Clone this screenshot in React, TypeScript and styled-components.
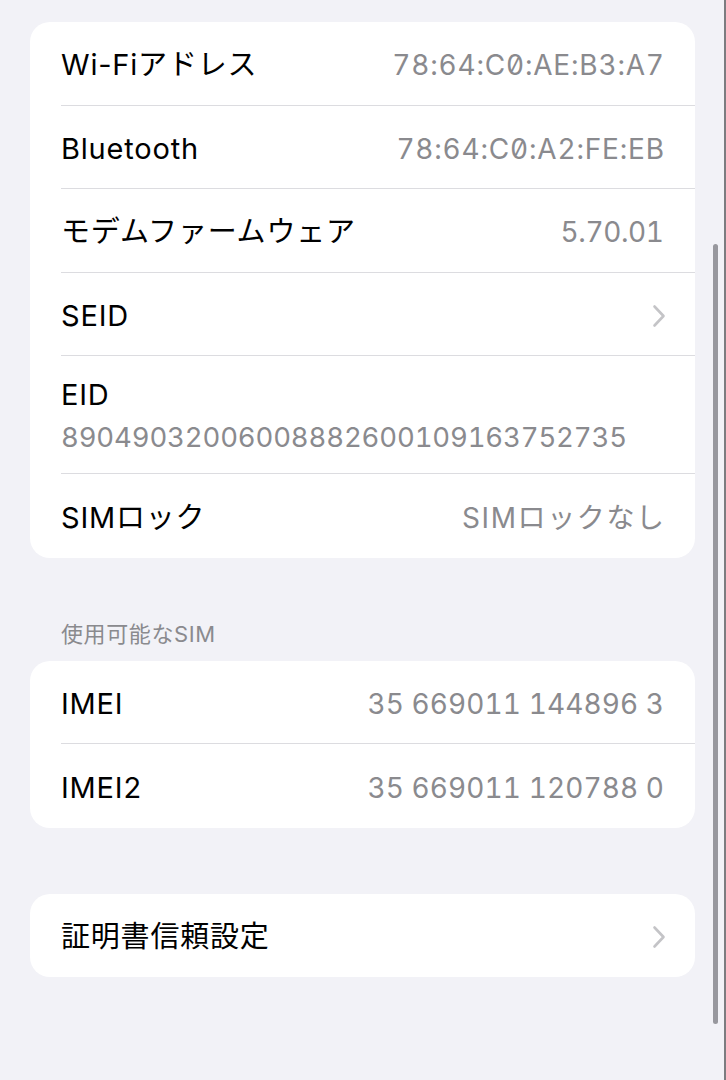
import React from "react";
import styled, { createGlobalStyle } from "styled-components";

const GlobalStyle = createGlobalStyle`
   html, body {
      margin: 0;
      padding: 0;
      background: #f2f2f7;
   }
   body {
      font-family: Inter, "Noto Sans CJK JP", sans-serif;
      -webkit-font-smoothing: antialiased;
   }
`;

const Screen = styled.div`
   position: relative;
   box-sizing: border-box;
   height: 1080px;
   overflow: hidden;
   padding: 22px 29px 0 30px;
   background: #f2f2f7;
   border-right: 2px solid #7c7c80;
`;

const Group = styled.div<{ gap?: number }>`
   background: #ffffff;
   border-radius: 20px;
   overflow: hidden;
   margin-top: ${({ gap }) => gap ?? 0}px;
`;

const SectionHeader = styled.div`
   margin: 62px 0 13px 31px;
   font-size: 22px;
   line-height: 28px;
   color: #8a8a8e;
   letter-spacing: 0.6px;
`;

const RowOuter = styled.div`
   padding-left: 31px;
   &:last-child > div {
      border-bottom: none;
   }
`;

const RowInner = styled.div`
   box-sizing: border-box;
   min-height: 83.5px;
   padding: 4px 31px 0 0;
   border-bottom: 1px solid #dcdce0;
   display: flex;
   align-items: center;
   justify-content: space-between;
   gap: 16px;
`;

const Label = styled.span`
   font-size: 29px;
   line-height: 36px;
   color: #000000;
   letter-spacing: 0.8px;
   white-space: nowrap;
`;

const Value = styled.span<{ tracking?: number; slashed?: boolean }>`
   font-size: 28px;
   line-height: 36px;
   color: #8a8a8e;
   white-space: nowrap;
   letter-spacing: ${({ tracking }) => tracking ?? 0}px;
   margin-right: ${({ tracking }) => -(tracking ?? 0)}px;
   font-feature-settings: "tnum" ${({ slashed }) => (slashed ? ', "zero"' : "")};
`;

const Stacked = styled.div`
   box-sizing: border-box;
   min-height: 117px;
   padding: 21px 31px 18px 0;
   border-bottom: 1px solid #dcdce0;
   display: flex;
   flex-direction: column;
   gap: 6px;
`;

const LongValue = styled(Value)`
   font-size: 27.5px;
`;

const Chevron = styled.svg`
   width: 14px;
   height: 24px;
   flex-shrink: 0;
   margin-right: -2px;
`;

const ScrollIndicator = styled.div`
   position: absolute;
   top: 244px;
   right: 6px;
   width: 5px;
   height: 780px;
   border-radius: 3px;
   background: #8e8e93;
   opacity: 0.9;
`;

const ChevronIcon: React.FC = () => (
   <Chevron viewBox="0 0 14 24">
      <path
         d="M2.5 2.5 L11.5 12 L2.5 21.5"
         fill="none"
         stroke="#c4c4c7"
         strokeWidth="2.6"
         strokeLinecap="round"
         strokeLinejoin="round"
      />
   </Chevron>
);

interface RowProps {
   label: string;
   value?: string;
   tracking?: number;
   slashed?: boolean;
   chevron?: boolean;
}

const Row: React.FC<RowProps> = ({ label, value, tracking, slashed, chevron }) => (
   <RowOuter>
      <RowInner>
         <Label>{label}</Label>
         {value && (
            <Value tracking={tracking} slashed={slashed}>
               {value}
            </Value>
         )}
         {chevron && <ChevronIcon />}
      </RowInner>
   </RowOuter>
);

const StackedRow: React.FC<{ label: string; value: string }> = ({ label, value }) => (
   <RowOuter>
      <Stacked>
         <Label>{label}</Label>
         <LongValue tracking={-0.15}>{value}</LongValue>
      </Stacked>
   </RowOuter>
);

const App: React.FC = () => (
   <>
      <GlobalStyle />
      <Screen>
         <Group>
            <Row label="Wi-Fiアドレス" value="78:64:C0:AE:B3:A7" tracking={0.8} slashed />
            <Row label="Bluetooth" value="78:64:C0:A2:FE:EB" tracking={0.8} slashed />
            <Row label="モデムファームウェア" value="5.70.01" tracking={-0.4} />
            <Row label="SEID" chevron />
            <StackedRow label="EID" value="89049032006008882600109163752735" />
            <Row label="SIMロック" value="SIMロックなし" tracking={1.6} />
         </Group>

         <SectionHeader>使用可能なSIM</SectionHeader>
         <Group>
            <Row label="IMEI" value="35 669011 144896 3" tracking={0.1} />
            <Row label="IMEI2" value="35 669011 120788 0" tracking={0.1} />
         </Group>

         <Group gap={66}>
            <Row label="証明書信頼設定" chevron />
         </Group>

         <ScrollIndicator />
      </Screen>
   </>
);

export default App;
